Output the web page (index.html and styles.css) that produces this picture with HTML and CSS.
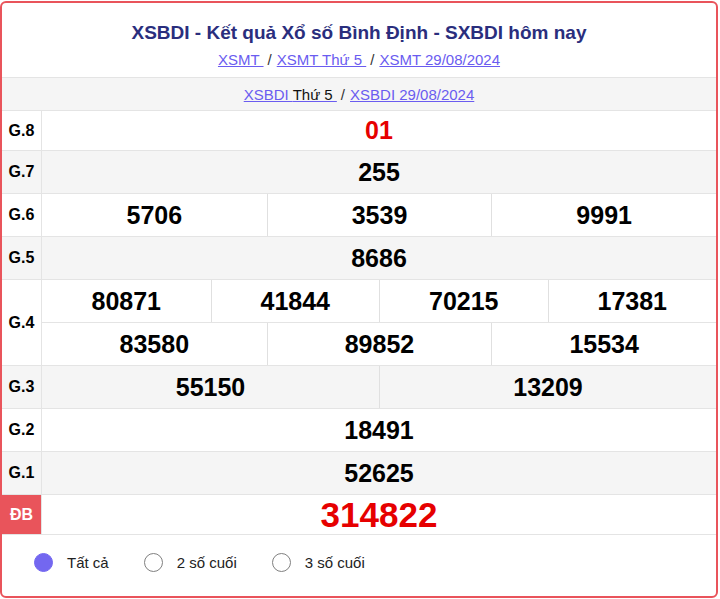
FILE: index.html
```html
<!DOCTYPE html>
<html lang="vi">
<head>
<meta charset="utf-8">
<title>XSBDI</title>
<link rel="stylesheet" href="styles.css">
</head>
<body>
<div class="box">
  <div class="head">
    <h1 class="title">XSBDI - Kết quả Xổ số Bình Định - SXBDI hôm nay</h1>
    <div class="crumbs">
      <a href="#">XSMT </a><span class="sep">/</span><a href="#">XSMT Thứ 5 </a><span class="sep">/</span><a href="#">XSMT 29/08/2024</a>
    </div>
  </div>
  <div class="subbar">
    <div class="subtext"><a href="#">XSBDI <span class="dark">Thứ 5 </span></a><span class="sep">/</span><a href="#">XSBDI 29/08/2024</a></div>
  </div>
  <div class="table">
    <div class="row r40 white">
      <div class="lbl">G.8</div>
      <div class="nums c1"><div class="n red">01</div></div>
    </div>
    <div class="row gray">
      <div class="lbl">G.7</div>
      <div class="nums c1"><div class="n">255</div></div>
    </div>
    <div class="row white">
      <div class="lbl">G.6</div>
      <div class="nums c3"><div class="n">5706</div><div class="n">3539</div><div class="n">9991</div></div>
    </div>
    <div class="row gray">
      <div class="lbl">G.5</div>
      <div class="nums c1"><div class="n">8686</div></div>
    </div>
    <div class="row double white">
      <div class="lbl">G.4</div>
      <div class="stack">
        <div class="nums c4 sub"><div class="n">80871</div><div class="n">41844</div><div class="n">70215</div><div class="n">17381</div></div>
        <div class="nums c3"><div class="n">83580</div><div class="n">89852</div><div class="n">15534</div></div>
      </div>
    </div>
    <div class="row gray">
      <div class="lbl">G.3</div>
      <div class="nums c2"><div class="n">55150</div><div class="n">13209</div></div>
    </div>
    <div class="row white">
      <div class="lbl">G.2</div>
      <div class="nums c1"><div class="n">18491</div></div>
    </div>
    <div class="row gray">
      <div class="lbl">G.1</div>
      <div class="nums c1"><div class="n">52625</div></div>
    </div>
    <div class="row r40 white">
      <div class="lbl db">ĐB</div>
      <div class="nums c1"><div class="n big red">314822</div></div>
    </div>
  </div>
  <div class="radios">
    <label class="opt"><span class="dot on"></span>Tất cả</label>
    <label class="opt"><span class="dot"></span>2 số cuối</label>
    <label class="opt"><span class="dot"></span>3 số cuối</label>
  </div>
</div>
</body>
</html>
```

FILE: styles.css
```css
* { box-sizing: border-box; }
html, body { margin: 0; padding: 0; background: #fff; }
body { font-family: "Liberation Sans", Arial, sans-serif; color: #000; }

.box {
  margin: 1px 2px 0 0;
  height: 597px;
  border: 2px solid #e9545b;
  border-radius: 6px;
  overflow: hidden;
  display: flex;
  flex-direction: column;
}

.head {
  height: 74px;
  display: flex;
  flex-direction: column;
  align-items: center;
  padding-top: 18px;
}
.title {
  margin: 0;
  font-size: 19px;
  line-height: 23px;
  font-weight: bold;
  color: #2a2e7d;
}
.crumbs {
  margin-top: 7px;
  font-size: 15px;
  line-height: 17px;
  color: #333;
}
.sep { margin: 0 5px 0 4px; color: #333; }
a { color: #6a5cf0; text-decoration: underline; }
.dark { color: #111; }

.subbar {
  height: 34px;
  border-top: 1px solid #e4e4e4;
  border-bottom: 1px solid #e4e4e4;
  background: #f5f5f5;
  display: flex;
  align-items: center;
  justify-content: center;
  font-size: 15px;
  color: #333;
}

.table { display: flex; flex-direction: column; }
.row {
  display: flex;
  height: 43px;
  border-bottom: 1px solid #e4e4e4;
}
.row.r40 { height: 40px; }
.row.double { height: 86px; }
.white { background: #fff; }
.gray { background: #f5f5f5; }

.lbl {
  width: 40px;
  flex: none;
  border-right: 1px solid #e4e4e4;
  display: flex;
  align-items: center;
  justify-content: center;
  font-size: 16px;
  font-weight: bold;
}
.lbl.db { background: #e9545b; color: #fff; }

.stack { flex: 1; display: flex; flex-direction: column; }
.stack .nums { flex: 1; }
.sub { border-bottom: 1px solid #e4e4e4; }

.nums { flex: 1; display: grid; }
.c1 { grid-template-columns: 1fr; }
.c2 { grid-template-columns: repeat(2, 1fr); }
.c3 { grid-template-columns: repeat(3, 1fr); }
.c4 { grid-template-columns: repeat(4, 1fr); }
.n {
  display: flex;
  align-items: center;
  justify-content: center;
  font-size: 25px;
  font-weight: bold;
  border-left: 1px solid #e0e0e0;
}
.n:first-child { border-left: none; }
.n.red { color: #e60000; }
.n.big { font-size: 35px; }

.radios {
  flex: 1;
  display: flex;
  align-items: center;
  padding-left: 32px;
  padding-bottom: 6px;
  font-size: 15px;
  color: #222;
}
.opt { display: flex; align-items: center; margin-right: 35px; }
.dot {
  width: 19px;
  height: 19px;
  border-radius: 50%;
  border: 1px solid #808080;
  margin-right: 14px;
  background: #fff;
}
.dot.on { background: #7367f0; border-color: #7367f0; }
```
